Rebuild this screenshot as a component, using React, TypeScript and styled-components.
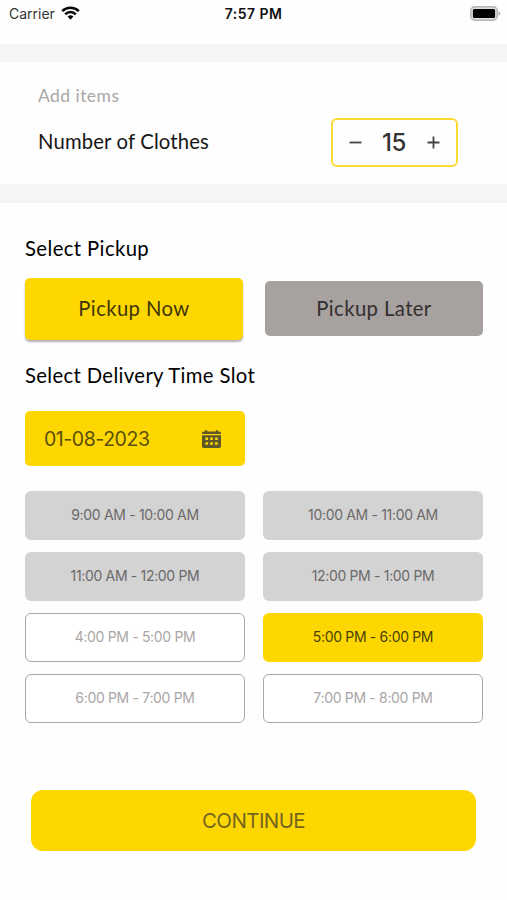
import React, { useState } from "react";
import styled, { createGlobalStyle, css } from "styled-components";

const YELLOW = "#ffd700";

const GlobalStyle = createGlobalStyle`
  *, *::before, *::after { box-sizing: border-box; }
  body { margin: 0; background: #fff; font-family: Lato, "Open Sans", sans-serif; }
  button { font: inherit; padding: 0; border: 0; background: none; cursor: pointer; }
`;

const Screen = styled.main`
  width: 507px;
  height: 900px;
  overflow: hidden;
  display: flex;
  flex-direction: column;
  background: #fefefe;
`;

const StatusBar = styled.header`
  height: 44px;
  padding: 4px 6px 0 9px;
  display: grid;
  grid-template-columns: 1fr auto 1fr;
  align-items: start;
  font-family: Inter, sans-serif;
  font-size: 14px;
  line-height: 20px;
  color: #111;
`;

const Carrier = styled.div`
  display: flex;
  align-items: center;
  gap: 6px;
  color: #333;

  svg {
    margin-top: -2px;
  }
`;

const Clock = styled.time`
  margin-right: 3px;
  font-weight: 600;
  font-size: 14px;
  letter-spacing: 0.45px;
`;

const Battery = styled.svg`
  justify-self: end;
  margin-top: 1.5px;
`;

const Divider = styled.div<{ $height: number }>`
  height: ${(p) => p.$height}px;
  background: #f5f5f5;
`;

const ItemsSection = styled.section`
  height: 122px;
  padding: 22px 49px 0 38px;
`;

const Hint = styled.p`
  margin: 0;
  width: max-content;
  font-size: 17.5px;
  line-height: 24px;
  letter-spacing: 0.45px;
  color: #aaa6a6;
`;

const ItemsRow = styled.div`
  display: flex;
  justify-content: space-between;
  margin-top: 10px;
`;

const ItemsLabel = styled.span`
  font-size: 20.3px;
  line-height: 47px;
  letter-spacing: 0.15px;
  color: #161616;
`;

const Stepper = styled.div`
  width: 127px;
  height: 49px;
  padding: 0 16px;
  display: flex;
  align-items: center;
  justify-content: space-between;
  border: 2px solid #fada35;
  border-radius: 6px;
`;

const StepButton = styled.button`
  width: 13px;
  height: 13px;
  display: flex;
`;

const Count = styled.output`
  font-family: Inter, sans-serif;
  font-size: 24px;
  font-weight: 500;
  line-height: 44px;
  letter-spacing: -0.5px;
  padding-right: 1px;
  color: #333;
`;

const Booking = styled.section`
  display: flex;
  flex-direction: column;
  padding: 31px 24px 0 25px;
`;

const Heading = styled.h2<{ $spacing: number }>`
  margin: 0;
  width: max-content;
  font-size: 20.3px;
  line-height: 28px;
  font-weight: 400;
  letter-spacing: ${(p) => p.$spacing}px;
  color: #000;
`;

const PickupOptions = styled.div`
  display: flex;
  justify-content: space-between;
  align-items: center;
  margin: 15px 0 21px;
  height: 63px;
`;

const PickupButton = styled.button<{ $active: boolean }>`
  width: 218px;
  height: 55px;
  padding-bottom: 2px;
  border-radius: 5px;
  font-size: 20.3px;
  letter-spacing: 0.4px;
  color: #332f2f;
  background: #a7a1a0;
  ${(p) =>
    p.$active &&
    css`
      height: 62px;
      color: #40360a;
      background: ${YELLOW};
      box-shadow: 0 2px 2px rgba(60, 60, 80, 0.4);
    `}
`;

const DateField = styled.button`
  width: 220px;
  height: 55px;
  margin: 22px 0 25px;
  padding: 0 24px 0 19px;
  display: flex;
  align-items: center;
  justify-content: space-between;
  border-radius: 5px;
  background: ${YELLOW};
  font-family: Inter, sans-serif;
  font-size: 19.5px;
  letter-spacing: -0.45px;
  color: #5a4e0c;
`;

const SlotGrid = styled.div`
  display: grid;
  grid-template-columns: 220px 220px;
  grid-auto-rows: 49px;
  column-gap: 18px;
  row-gap: 12px;
`;

type SlotState = "disabled" | "open" | "selected";

const slotStyles = {
  disabled: css`
    background: #d3d3d3;
    color: #6c6969;
  `,
  open: css`
    background: #fff;
    border: 1px solid #a9a7a7;
    color: #aaa6a6;
  `,
  selected: css`
    background: ${YELLOW};
    color: #4a3f08;
  `,
};

const Slot = styled.button<{ $state: SlotState }>`
  padding-bottom: 2px;
  border-radius: 6px;
  font-family: Inter, sans-serif;
  font-size: 14px;
  letter-spacing: -0.33px;
  ${(p) => slotStyles[p.$state]}
`;

const Continue = styled.button`
  width: 445px;
  height: 61px;
  margin: 67px 0 0 31px;
  border-radius: 12px;
  background: ${YELLOW};
  font-family: Inter, sans-serif;
  font-size: 20.5px;
  letter-spacing: -0.6px;
  color: #736620;
`;

const slots: { label: string; state: SlotState }[] = [
  { label: "9:00 AM - 10:00 AM", state: "disabled" },
  { label: "10:00 AM - 11:00 AM", state: "disabled" },
  { label: "11:00 AM - 12:00 PM", state: "disabled" },
  { label: "12:00 PM - 1:00 PM", state: "disabled" },
  { label: "4:00 PM - 5:00 PM", state: "open" },
  { label: "5:00 PM - 6:00 PM", state: "selected" },
  { label: "6:00 PM - 7:00 PM", state: "open" },
  { label: "7:00 PM - 8:00 PM", state: "open" },
];

const WifiIcon = () => (
  <svg width="19" height="14" viewBox="0 0 19 14" fill="none" stroke="#080808" strokeWidth="2.5">
    <path d="M1.2 5.1A11.8 11.8 0 0 1 17.8 5.1" />
    <path d="M4.2 8.3A7.5 7.5 0 0 1 14.8 8.3" />
    <path d="M6.6 10.6A4.2 4.2 0 0 1 12.4 10.6L9.5 13.7Z" fill="#080808" stroke="none" />
  </svg>
);

const BatteryIcon = () => (
  <Battery width="31" height="15" viewBox="0 0 31 15">
    <rect x="0.8" y="0.8" width="26.4" height="13.4" rx="4" fill="#ddd" stroke="#b5b5b5" strokeWidth="1.5" />
    <rect x="2.9" y="2.9" width="22.2" height="9.2" rx="1.5" fill="#000" />
    <path d="M28.4 5.2Q30.6 6 30.6 7.5T28.4 9.8Z" fill="#b5b5b5" />
  </Battery>
);

const CalendarIcon = () => (
  <svg width="19" height="18" viewBox="0 0 19 18" fill="#5e5728">
    <path d="M1.6 1.4H3V0.3H5.2V1.4H13.8V0.3H16V1.4H17.4Q19 1.4 19 3V4.1H0V3Q0 1.4 1.6 1.4Z" />
    <path
      fillRule="evenodd"
      d="M0 5.3H19V16.2Q19 17.9 17.3 17.9H1.7Q0 17.9 0 16.2ZM3.4 7.6V10.1H6.1V7.6ZM8.2 7.6V10.1H10.9V7.6ZM13 7.6V10.1H15.7V7.6ZM3.4 12.2V14.8H6.1V12.2ZM8.2 12.2V14.8H10.9V12.2ZM13 12.2V14.8H15.7V12.2Z"
    />
  </svg>
);

export default function App() {
  const [count, setCount] = useState(15);
  const [pickup, setPickup] = useState("Pickup Now");

  return (
    <>
      <GlobalStyle />
      <Screen>
        <StatusBar>
          <Carrier>
            Carrier
            <WifiIcon />
          </Carrier>
          <Clock>7:57 PM</Clock>
          <BatteryIcon />
        </StatusBar>
        <Divider $height={18} />
        <ItemsSection>
          <Hint>Add items</Hint>
          <ItemsRow>
            <ItemsLabel>Number of Clothes</ItemsLabel>
            <Stepper>
              <StepButton aria-label="Decrease" onClick={() => setCount(Math.max(0, count - 1))}>
                <svg width="13" height="13" stroke="#444" strokeWidth="1.8">
                  <path d="M0.5 6.5H12.5" />
                </svg>
              </StepButton>
              <Count>{count}</Count>
              <StepButton aria-label="Increase" onClick={() => setCount(count + 1)}>
                <svg width="13" height="13" stroke="#444" strokeWidth="1.8">
                  <path d="M0.5 6.5H12.5M6.5 0.5V12.5" />
                </svg>
              </StepButton>
            </Stepper>
          </ItemsRow>
        </ItemsSection>
        <Divider $height={19} />
        <Booking>
          <Heading $spacing={0.4}>Select Pickup</Heading>
          <PickupOptions>
            {["Pickup Now", "Pickup Later"].map((label) => (
              <PickupButton key={label} $active={pickup === label} onClick={() => setPickup(label)}>
                {label}
              </PickupButton>
            ))}
          </PickupOptions>
          <Heading $spacing={0.35}>Select Delivery Time Slot</Heading>
          <DateField>
            01-08-2023
            <CalendarIcon />
          </DateField>
          <SlotGrid>
            {slots.map((slot) => (
              <Slot key={slot.label} $state={slot.state} disabled={slot.state === "disabled"}>
                {slot.label}
              </Slot>
            ))}
          </SlotGrid>
        </Booking>
        <Continue>CONTINUE</Continue>
      </Screen>
    </>
  );
}
